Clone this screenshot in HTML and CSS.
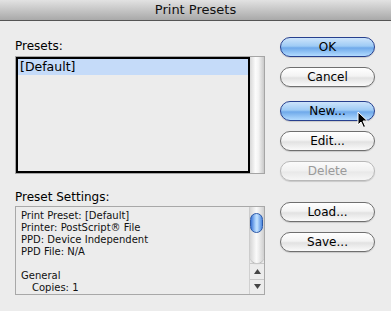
FILE: index.html
```html
<!DOCTYPE html>
<html lang="en">
<head>
	<meta charset="UTF-8">
	<title>Print Presets</title>
	<link rel="stylesheet" href="styles.css">
</head>
<body>
	<div class="window">
		<div class="title-bar">Print Presets</div>
		<div class="content">
			<div class="left">
				<div class="label">Presets:</div>
				<div class="list-wrap">
					<div class="list">
						<div class="row selected">[Default]</div>
					</div>
					<div class="list-scroll"></div>
				</div>

				<div class="label settings-label">Preset Settings:</div>
				<div class="settings">
					<div class="settings-text">
						<div>Print Preset: [Default]</div>
						<div>Printer: PostScript® File</div>
						<div>PPD: Device Independent</div>
						<div>PPD File: N/A</div>
						<div>&nbsp;</div>
						<div>General</div>
						<div class="indent">Copies: 1</div>
					</div>
					<div class="scrollbar">
						<div class="track">
							<div class="thumb"></div>
						</div>
						<div class="arrow">
							<svg width="7" height="5" viewBox="0 0 7 5"><path d="M3.5 0 L7 5 L0 5 Z" fill="#444"/></svg>
						</div>
						<div class="arrow">
							<svg width="7" height="5" viewBox="0 0 7 5"><path d="M0 0 L7 0 L3.5 5 Z" fill="#444"/></svg>
						</div>
					</div>
				</div>
			</div>

			<div class="right">
				<button class="btn blue">OK</button>
				<button class="btn">Cancel</button>
				<button class="btn blue gap">New...</button>
				<button class="btn">Edit...</button>
				<button class="btn disabled">Delete</button>
				<button class="btn gap2">Load...</button>
				<button class="btn">Save...</button>
			</div>
		</div>

		<svg class="cursor" width="12" height="18" viewBox="0 0 12 18">
			<path d="M1 1 L1 14 L4 11 L6.5 16.5 L8.5 15.5 L6 10 L10.5 10 Z" fill="#000" stroke="#fff" stroke-width="1"/>
		</svg>
	</div>
</body>
</html>
```

FILE: styles.css
```css
*{
	margin: 0;
	padding: 0;
	box-sizing: border-box;
}
body{
	background: #ececec;
	font-family: "DejaVu Sans", "Liberation Sans", sans-serif;
	color: #000;
}
.window{
	position: relative;
	width: 391px;
	height: 311px;
	background: #ececec;
	overflow: hidden;
}
.title-bar{
	height: 21px;
	line-height: 20px;
	text-align: center;
	font-size: 13px;
	color: #111;
	background: linear-gradient(#e2e2e2, #a9a9a9);
	border-bottom: 1px solid #555;
}
.content{
	display: flex;
	padding-left: 15px;
}
.left{
	width: 250px;
}
.label{
	font-size: 12px;
	line-height: 15px;
	padding-top: 18px;
	height: 35px;
}
.list-wrap{
	display: flex;
	height: 118px;
	border: 1px solid #a5a5a5;
}
.list{
	flex: 1;
	border: 2px solid #000;
	background: #ececec;
}
.row{
	font-size: 12.5px;
	line-height: 16px;
	padding-left: 2px;
}
.selected{
	background: #c5dbf9;
}
.list-scroll{
	width: 14px;
	background: linear-gradient(to right, #d8d8d8, #fcfcfc 40%, #f4f4f4 60%, #c9c9c9);
}
.settings-label{
	padding-top: 16px;
	height: 32px;
}
.settings{
	display: flex;
	height: 89px;
	border: 1px solid #a8a8a8;
	background: #ececec;
}
.settings-text{
	flex: 1;
	padding: 3px 0 0 5px;
	font-size: 10px;
	line-height: 12px;
	color: #111;
	overflow: hidden;
}
.indent{
	padding-left: 11px;
}
.scrollbar{
	width: 15px;
	display: flex;
	flex-direction: column;
	border-left: 1px solid #d0d0d0;
}
.track{
	height: 56px;
	padding-top: 6px;
	background: linear-gradient(to right, #d6d6d6, #fafafa 45%, #f0f0f0 60%, #cfcfcf);
	border-bottom-left-radius: 7px;
	border-bottom-right-radius: 7px;
	box-shadow: 0 1px 1px #aaa;
}
.thumb{
	width: 13px;
	height: 20px;
	border-radius: 7px;
	border: 1px solid #2c59a8;
	background: linear-gradient(to right, #3c75d6, #a8d0fb 40%, #c4e3ff 55%, #4e89e0);
}
.arrow{
	flex: 1;
	display: flex;
	align-items: center;
	justify-content: center;
	border-top: 1px solid #c8c8c8;
}
.arrow:first-of-type{
	border-top: none;
}
.right{
	width: 95px;
	margin-left: 15px;
	padding-top: 16px;
	display: flex;
	flex-direction: column;
	gap: 10px;
}
.btn{
	height: 20px;
	border-radius: 10px;
	border: 1px solid #6f6f6f;
	background: linear-gradient(#ffffff, #f3f3f3 45%, #e2e2e2 55%, #fafafa);
	font-family: "DejaVu Sans", "Liberation Sans", sans-serif;
	font-size: 12px;
	color: #000;
	box-shadow: 0 1px 1px rgba(0,0,0,0.15);
}
.blue{
	border-color: #27408e;
	background: linear-gradient(#cde4fb, #9ecbf5 45%, #6fa9ea 55%, #b2dbff);
}
.gap{
	margin-top: 4px;
}
.gap2{
	margin-top: 11px;
}
.disabled{
	color: #9a9a9a;
	border-color: #b8b8b8;
	background: linear-gradient(#fbfbfb, #f0f0f0 50%, #e8e8e8 55%, #f6f6f6);
}
.cursor{
	position: absolute;
	left: 357px;
	top: 111px;
}
```
